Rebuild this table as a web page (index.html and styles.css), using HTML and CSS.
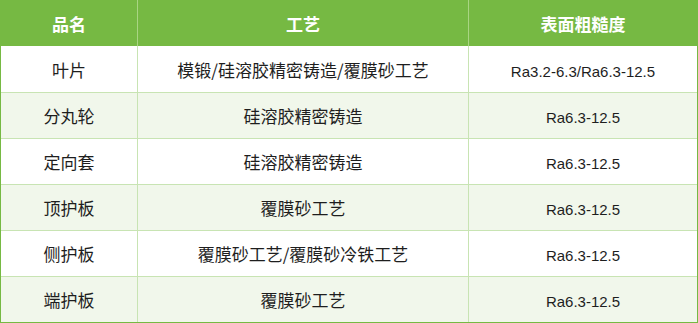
FILE: index.html
```html
<!DOCTYPE html>
<html lang="zh-CN">
<head>
<meta charset="utf-8">
<title>品名 工艺 表面粗糙度</title>
<link rel="stylesheet" href="styles.css">
</head>
<body>
<table class="spec">
  <colgroup>
    <col class="c1">
    <col class="c2">
    <col class="c3">
  </colgroup>
  <thead>
    <tr><th>品名</th><th>工艺</th><th>表面粗糙度</th></tr>
  </thead>
  <tbody>
    <tr><td>叶片</td><td>模锻/硅溶胶精密铸造/覆膜砂工艺</td><td><span class="ra">Ra3.2-6.3/Ra6.3-12.5</span></td></tr>
    <tr class="alt"><td>分丸轮</td><td>硅溶胶精密铸造</td><td><span class="ra">Ra6.3-12.5</span></td></tr>
    <tr><td>定向套</td><td>硅溶胶精密铸造</td><td><span class="ra">Ra6.3-12.5</span></td></tr>
    <tr class="alt"><td>顶护板</td><td>覆膜砂工艺</td><td><span class="ra">Ra6.3-12.5</span></td></tr>
    <tr><td>侧护板</td><td>覆膜砂工艺/覆膜砂冷铁工艺</td><td><span class="ra">Ra6.3-12.5</span></td></tr>
    <tr class="alt"><td>端护板</td><td>覆膜砂工艺</td><td><span class="ra">Ra6.3-12.5</span></td></tr>
  </tbody>
</table>
</body>
</html>
```
FILE: styles.css
```css
html, body {
  margin: 0;
  padding: 0;
  background: #ffffff;
}

.spec {
  width: 698px;
  border-collapse: separate;
  border-spacing: 0;
  table-layout: fixed;
  border: 1px solid #76b943;
  border-top: none;
  font-family: "Noto Sans CJK SC", "Microsoft YaHei", sans-serif;
  font-size: 17px;
  color: #1e1e1e;
}

.c1 { width: 137px; }
.c2 { width: 331px; }
.c3 { width: 228px; }

.spec th {
  height: 46px;
  padding: 0;
  background: #76b943;
  color: #ffffff;
  font-weight: bold;
  font-size: 17px;
  text-align: center;
  vertical-align: middle;
  border-right: 1px solid #a9d583;
}

.spec th:last-child,
.spec td:last-child {
  border-right: none;
}

.spec td {
  height: 45px;
  padding: 0;
  text-align: center;
  vertical-align: middle;
  border-right: 1px solid #c8e4b3;
  border-top: 1px solid #c8e4b3;
  background: #ffffff;
}

.spec tbody tr:first-child td {
  border-top: none;
  height: 46px;
}

.spec tr.alt td {
  background: #f1f7eb;
}

.ra {
  font-family: "Liberation Sans", Arial, sans-serif;
  font-size: 15px;
}
```
